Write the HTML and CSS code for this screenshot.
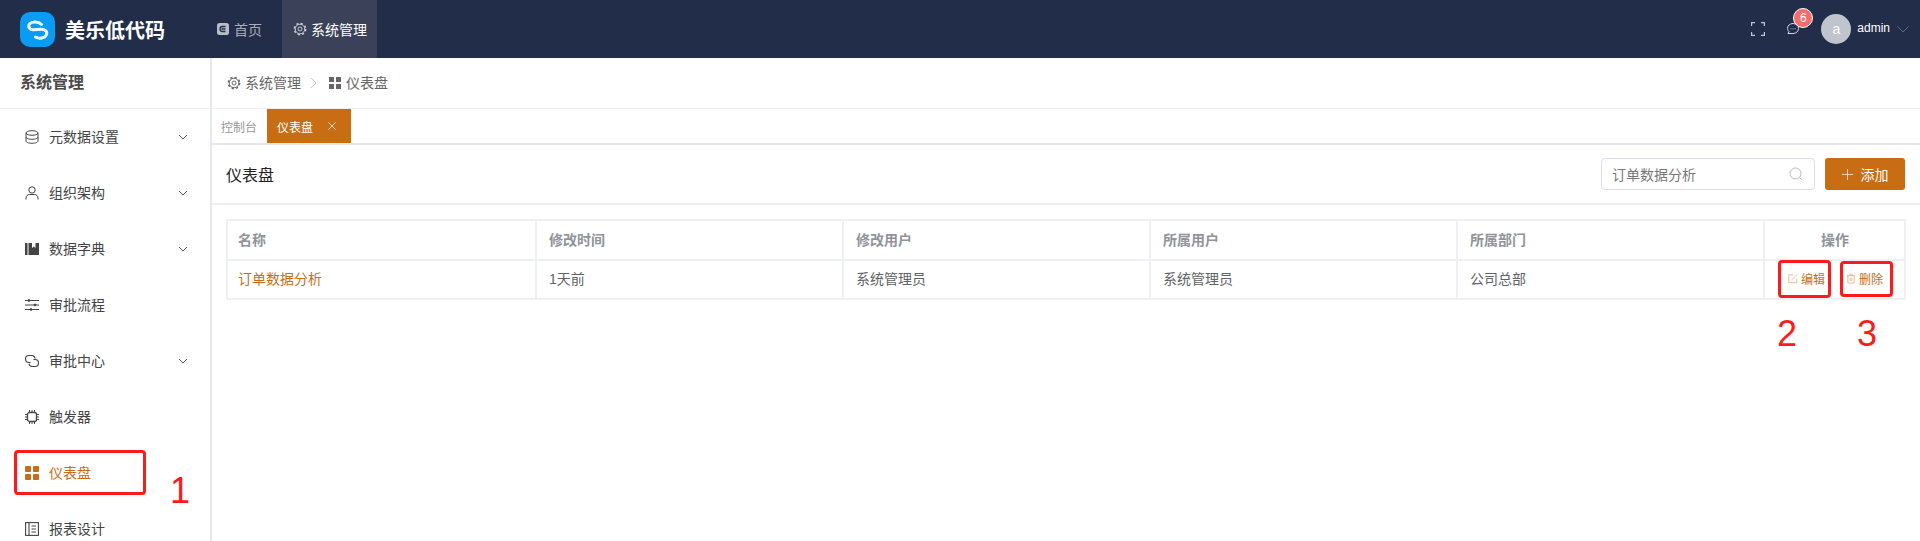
FILE: index.html
```html
<!DOCTYPE html>
<html lang="zh-CN">

<head>
    <meta charset="UTF-8">
    <title>美乐低代码</title>
    <link rel="stylesheet" href="styles.css">
</head>

<body>
    <header class="topbar">
        <div class="logo">
            <svg class="logo-mark" viewBox="0 0 35 35">
                <rect width="35" height="35" rx="10" fill="#0a9cf5" />
                <path d="M21.500 12.500C18.500 9.500 12 9 9.500 12C7.500 15 10 18 13.500 17.800L21 17.200C25 17 27.500 19.500 26.500 22.500C25 26.500 19 27 15.500 25" fill="none" stroke="#eef8ff" stroke-width="3" stroke-linecap="round" />
            </svg>
            <span class="logo-text">美乐低代码</span>
        </div>
        <nav class="topnav">
            <a class="topnav-item">
                <svg class="icon-14" viewBox="0 0 14 14">
                    <rect x="1" y="1" width="12" height="12" rx="2.500" fill="#b9bdc8" />
                    <path d="M9.500 4.500H6.500a2.500 2.500 0 0 0 0 5h3M5.500 7h4" fill="none" stroke="#222d4a" stroke-width="1.300" />
                </svg>
                首页
            </a>
            <a class="topnav-item active">
                <svg class="icon-14" viewBox="0 0 14 14" fill="none" stroke="#c9ccd4">
                    <circle cx="7" cy="7" r="4.800" />
                    <circle cx="7" cy="7" r="5.700" stroke-width="1.400" stroke-dasharray="2.200 2.280" />
                    <circle cx="7" cy="7" r="2" />
                </svg>
                系统管理
            </a>
        </nav>
        <div class="top-right">
            <svg class="fullscreen" viewBox="0 0 14 14" fill="none" stroke="#c4c7cf" stroke-width="1.200">
                <path d="M.6 4V.6H4M10 .6h3.400V4M13.400 10v3.400H10M4 13.400H.6V10" />
            </svg>
            <div class="message">
                <svg class="icon-14" viewBox="0 0 14 14" fill="none" stroke="#d6d8de" stroke-width="1">
                    <path d="M7 1.500c3.200 0 5.500 2.200 5.500 5s-2.300 5-5.500 5H2l1-1.800C2 8.800 1.500 7.700 1.500 6.500c0-2.800 2.300-5 5.500-5z" />
                    <path d="M4.500 6.800h.8M6.600 6.800h.8M8.700 6.800h.8" />
                </svg>
                <span class="badge">6</span>
            </div>
            <div class="avatar">a</div>
            <span class="username">admin</span>
            <svg class="user-arrow" viewBox="0 0 12 7" fill="none" stroke="#5f6881" stroke-width="1">
                <path d="M.5.500 6 6 11.500.500" />
            </svg>
        </div>
    </header>

    <div class="layout">
        <aside class="sidebar">
            <div class="sidebar-title">系统管理</div>
            <ul class="menu">
                <li class="menu-item">
                    <svg class="menu-icon" viewBox="0 0 14 14" fill="none" stroke="#444" stroke-width="1">
                        <ellipse cx="7" cy="3" rx="6" ry="2.300" />
                        <path d="M1 3v8c0 1.300 2.700 2.300 6 2.300s6-1 6-2.300V3M1 7c0 1.300 2.700 2.300 6 2.300S13 8.300 13 7" />
                    </svg>
                    <span class="menu-label">元数据设置</span>
                    <svg class="menu-arrow" viewBox="0 0 10 6" fill="none" stroke="#555" stroke-width="1"><path d="M1 1l4 4 4-4" /></svg>
                </li>
                <li class="menu-item">
                    <svg class="menu-icon" viewBox="0 0 14 14" fill="none" stroke="#444" stroke-width="1">
                        <circle cx="7" cy="4" r="3.200" />
                        <path d="M1 13.500v-1.500c0-2 1.500-3.500 3.500-3.500h5c2 0 3.500 1.500 3.500 3.500v1.500" />
                    </svg>
                    <span class="menu-label">组织架构</span>
                    <svg class="menu-arrow" viewBox="0 0 10 6" fill="none" stroke="#555" stroke-width="1"><path d="M1 1l4 4 4-4" /></svg>
                </li>
                <li class="menu-item">
                    <svg class="menu-icon" viewBox="0 0 14 14" fill="#444">
                        <rect x="0" y="1" width="2.500" height="12" />
                        <path d="M3.500 1h3.500v5l1.800-1.500L10.500 6V1H14v12H3.500z" />
                    </svg>
                    <span class="menu-label">数据字典</span>
                    <svg class="menu-arrow" viewBox="0 0 10 6" fill="none" stroke="#555" stroke-width="1"><path d="M1 1l4 4 4-4" /></svg>
                </li>
                <li class="menu-item">
                    <svg class="menu-icon" viewBox="0 0 14 14" fill="#444" stroke="#444" stroke-width="1">
                        <path d="M0 2.500h14M0 7h14M0 11.500h14" fill="none" />
                        <circle cx="4" cy="2.500" r=".9" />
                        <circle cx="10" cy="7" r=".9" />
                        <circle cx="6" cy="11.500" r=".9" />
                    </svg>
                    <span class="menu-label">审批流程</span>
                </li>
                <li class="menu-item">
                    <svg class="menu-icon" viewBox="0 0 14 14" fill="none" stroke="#444" stroke-width="1.100">
                        <path d="M5.500 8.500H4a3.300 3.300 0 0 1 0-7h3a3.300 3.300 0 0 1 3 3" />
                        <path d="M8.500 5.500H10a3.300 3.300 0 0 1 0 7H7a3.300 3.300 0 0 1-3-3" />
                    </svg>
                    <span class="menu-label">审批中心</span>
                    <svg class="menu-arrow" viewBox="0 0 10 6" fill="none" stroke="#555" stroke-width="1"><path d="M1 1l4 4 4-4" /></svg>
                </li>
                <li class="menu-item">
                    <svg class="menu-icon" viewBox="0 0 14 14" fill="none" stroke="#444" stroke-width="1">
                        <rect x="2.500" y="2.500" width="9" height="9" rx="2" stroke-width="1.300" />
                        <path d="M4.500 0v2M7 0v2M9.500 0v2M4.500 12v2M7 12v2M9.500 12v2M0 4.500h2M0 7h2M0 9.500h2M12 4.500h2M12 7h2M12 9.500h2" />
                    </svg>
                    <span class="menu-label">触发器</span>
                </li>
                <li class="menu-item selected">
                    <svg class="menu-icon" viewBox="0 0 14 14" fill="#c96d14">
                        <rect x="0" y="0" width="6" height="6" rx="1" />
                        <rect x="8" y="0" width="6" height="6" rx="1" />
                        <rect x="0" y="8" width="6" height="6" rx="1" />
                        <rect x="8" y="8" width="6" height="6" rx="1" />
                    </svg>
                    <span class="menu-label">仪表盘</span>
                </li>
                <li class="menu-item">
                    <svg class="menu-icon" viewBox="0 0 14 14" fill="none" stroke="#444" stroke-width="1.100">
                        <rect x=".6" y=".6" width="12.800" height="12.800" />
                        <path d="M4 .6v12.800M6.500 4h4.500M6.500 7h4.500M6.500 10h4.500" />
                    </svg>
                    <span class="menu-label">报表设计</span>
                </li>
            </ul>
        </aside>

        <main class="content">
            <div class="breadcrumb">
                <svg class="crumb-icon" viewBox="0 0 14 14" fill="none" stroke="#666">
                    <circle cx="7" cy="7" r="4.800" />
                    <circle cx="7" cy="7" r="5.700" stroke-width="1.400" stroke-dasharray="2.200 2.280" />
                    <circle cx="7" cy="7" r="2" />
                </svg>
                <span class="crumb-text">系统管理</span>
                <svg class="crumb-sep" viewBox="0 0 7 12" fill="none" stroke="#c0c4cc" stroke-width="1"><path d="M1 1l5 5-5 5" /></svg>
                <svg class="crumb-icon" viewBox="0 0 14 14" fill="#666">
                    <rect x="1" y="1" width="5" height="5" />
                    <rect x="8" y="1" width="5" height="5" />
                    <rect x="1" y="8" width="5" height="5" />
                    <rect x="8" y="8" width="5" height="5" />
                </svg>
                <span class="crumb-text">仪表盘</span>
            </div>

            <div class="tabs">
                <span class="tab">控制台</span>
                <span class="tab tab-active">仪表盘
                    <svg class="tab-close" viewBox="0 0 8 8" fill="none" stroke="#f3dcc6" stroke-width="1"><path d="M.5.500l7 7M7.500.500l-7 7" /></svg>
                </span>
            </div>

            <div class="toolbar">
                <h2 class="page-title">仪表盘</h2>
                <div class="search">
                    <span>订单数据分析</span>
                    <svg class="search-icon" viewBox="0 0 14 14" fill="none" stroke="#b4b8bf" stroke-width="1"><circle cx="6.500" cy="6.500" r="5.500" /><path d="M10.500 10.500l2.500 2.500" /></svg>
                </div>
                <button class="add-btn">
                    <svg class="plus" viewBox="0 0 12 12" fill="none" stroke="#f2d9c0" stroke-width="1"><path d="M6 0v12M0 6h12" /></svg>
                    添加
                </button>
            </div>

            <div class="table-wrap">
                <table class="data-table">
                    <thead>
                        <tr>
                            <th class="col-name">名称</th>
                            <th class="col-mid">修改时间</th>
                            <th class="col-mid">修改用户</th>
                            <th class="col-mid">所属用户</th>
                            <th class="col-mid">所属部门</th>
                            <th class="col-ops">操作</th>
                        </tr>
                    </thead>
                    <tbody>
                        <tr>
                            <td class="link">订单数据分析</td>
                            <td>1天前</td>
                            <td>系统管理员</td>
                            <td>系统管理员</td>
                            <td>公司总部</td>
                            <td class="ops">
                                <a class="op">
                                    <svg class="op-icon" viewBox="0 0 12 12" fill="none" stroke="#e3b080" stroke-width="1">
                                        <path d="M6 1.500H1v9.500h9.500V6" />
                                        <path d="M4.500 7.500 11 1" />
                                    </svg>
                                    编辑
                                </a>
                                <a class="op">
                                    <svg class="op-icon" viewBox="0 0 12 12" fill="none" stroke="#e3b080" stroke-width="1">
                                        <path d="M1 2.500h10M4.500 2.500V.8h3v1.700M2.200 2.500v9h7.600v-9M5 5v4M7 5v4" />
                                    </svg>
                                    删除
                                </a>
                            </td>
                        </tr>
                    </tbody>
                </table>
            </div>
        </main>
    </div>

    <!-- red marks drawn over the screenshot -->
    <div class="mark mark-menu"></div>
    <div class="mark mark-edit"></div>
    <div class="mark mark-del"></div>
    <span class="mark-num num-1">1</span>
    <span class="mark-num num-2">2</span>
    <span class="mark-num num-3">3</span>
</body>

</html>
```

FILE: styles.css
```css
* {
    box-sizing: border-box;
}

html,
body {
    height: 541px;
    overflow: hidden;
}

body {
    margin: 0;
    position: relative;
    font-family: "Liberation Sans", "Noto Sans CJK SC", sans-serif;
    font-size: 14px;
    color: #333;
    background-color: #fff;
}

svg {
    display: block;
    flex-shrink: 0;
}

.icon-14 {
    width: 14px;
    height: 14px;
}

/* top bar */
.topbar {
    display: flex;
    align-items: center;
    height: 58px;
    background-color: #222d4a;
    color: #fff;
}

.logo {
    display: flex;
    align-items: center;
    width: 205px;
    padding-left: 20px;
}

.logo-mark {
    width: 35px;
    height: 35px;
}

.logo-text {
    margin-left: 10px;
    font-size: 20px;
    font-weight: bold;
}

.topnav {
    display: flex;
    height: 100%;
}

.topnav-item {
    display: flex;
    align-items: center;
    gap: 4px;
    height: 100%;
    padding: 0 0 0 11px;
    white-space: nowrap;
    color: #a9adb9;
}

.topnav-item:first-child {
    width: 77px;
}

.topnav-item.active {
    width: 95px;
    background-color: #3a4159;
    color: #fff;
}

.top-right {
    display: flex;
    align-items: center;
    margin-left: auto;
    padding-right: 11px;
}

.fullscreen {
    width: 14px;
    height: 14px;
    margin-right: 21px;
}

.message {
    position: relative;
    margin-right: 21px;
}

.badge {
    position: absolute;
    top: -14px;
    left: 7px;
    width: 20px;
    height: 20px;
    border: 1px solid #fff;
    border-radius: 50%;
    background-color: #f56c6c;
    color: #fff;
    font-size: 12px;
    line-height: 18px;
    text-align: center;
}

.avatar {
    width: 30px;
    height: 30px;
    border-radius: 50%;
    background-color: #c0c4cc;
    color: #fff;
    font-size: 14px;
    line-height: 30px;
    text-align: center;
}

.username {
    margin-left: 6px;
    font-size: 12px;
    color: #fff;
    position: relative;
    top: -1px;
}

.user-arrow {
    width: 12px;
    height: 7px;
    margin-left: 7px;
}

/* sidebar */
.layout {
    display: flex;
    height: 483px;
}

.sidebar {
    width: 212px;
    flex-shrink: 0;
    border-right: 2px solid #e6e8ee;
    overflow: hidden;
}

.sidebar-title {
    height: 51px;
    padding: 0 20px;
    border-bottom: 1px solid #eef0f6;
    font-size: 16px;
    font-weight: bold;
    line-height: 50px;
    color: #4a4a4a;
}

.menu {
    list-style: none;
    margin: 0;
    padding: 0;
}

.menu-item {
    display: flex;
    align-items: center;
    height: 56px;
    padding: 0 22px 0 25px;
    color: #444;
}

.menu-icon {
    width: 14px;
    height: 14px;
    margin-right: 10px;
}

.menu-label {
    padding-bottom: 2px;
}

.menu-arrow {
    width: 10px;
    height: 6px;
    margin-left: auto;
}

.menu-item.selected {
    color: #c96d14;
}

/* main part */
.content {
    flex: 1;
    min-width: 0;
}

.breadcrumb {
    display: flex;
    align-items: center;
    height: 51px;
    padding: 0 15px 1px;
    border-bottom: 1px solid #eef0f6;
    color: #666;
}

.crumb-icon {
    width: 14px;
    height: 14px;
    margin-right: 4px;
}

.crumb-text {
    padding-bottom: 2px;
}

.crumb-sep {
    width: 7px;
    height: 12px;
    margin: 0 11px 0 9px;
}

.tabs {
    display: flex;
    height: 36px;
    border-bottom: 2px solid #e6e8ee;
}

.tab {
    display: flex;
    align-items: center;
    height: 34px;
    padding: 0 10px 0 9px;
    font-size: 12px;
    color: #999;
}

.tab-active {
    justify-content: space-between;
    width: 84px;
    padding: 0 10px;
    background-color: #c96d14;
    color: #fff;
}

.tab-close {
    width: 8px;
    height: 8px;
    margin-right: 5px;
}

.toolbar {
    display: flex;
    align-items: center;
    height: 60px;
    padding: 0 15px 0 14px;
    border-bottom: 2px solid #eceef5;
}

.page-title {
    margin: 0;
    font-size: 16px;
    font-weight: normal;
    color: #222;
}

.search {
    display: flex;
    align-items: center;
    justify-content: space-between;
    width: 214px;
    height: 32px;
    margin-left: auto;
    padding: 0 11px 0 10px;
    border: 1px solid #dcdfe6;
    border-radius: 4px;
    color: #777;
}

.search-icon {
    width: 14px;
    height: 14px;
}

.add-btn {
    display: flex;
    align-items: center;
    justify-content: center;
    gap: 8px;
    width: 80px;
    height: 32px;
    margin-left: 10px;
    border: 0;
    border-radius: 3px;
    background-color: #c96d14;
    color: #fff;
    font-family: inherit;
    font-size: 14px;
}

.plus {
    width: 11px;
    height: 11px;
}

/* table */
.table-wrap {
    padding: 14px 14px 0;
}

.data-table {
    width: 1680px;
    border-collapse: collapse;
    table-layout: fixed;
}

.data-table th,
.data-table td {
    height: 40px;
    padding: 0 11px 3px 12px;
    border: 2px solid #eef0f6;
    text-align: left;
    font-size: 14px;
}

.data-table th {
    color: #909399;
    font-weight: bold;
}

.data-table td {
    height: 39px;
    padding-bottom: 4px;
    color: #606266;
}

.data-table .col-name,
.data-table .link {
    padding-left: 10px;
}

.col-name {
    width: 309px;
}

.col-mid {
    width: 307px;
}

.data-table th.col-ops {
    text-align: center;
}

.data-table td.link {
    color: #c96d14;
}

.data-table td.ops {
    padding: 0 0 3px;
}

.ops {
    white-space: nowrap;
}

.op {
    display: inline-flex;
    align-items: center;
    gap: 3px;
    margin-left: 23px;
    font-size: 12px;
    color: #c96d14;
}

.op + .op {
    margin-left: 17px;
}

.op-icon {
    width: 10px;
    height: 11px;
}

/* annotations */
.mark {
    position: absolute;
    border: 3px solid #fb1b1b;
    border-radius: 4px;
}

.mark-menu {
    left: 14px;
    top: 450px;
    width: 132px;
    height: 45px;
}

.mark-edit {
    left: 1778px;
    top: 260px;
    width: 53px;
    height: 38px;
}

.mark-del {
    left: 1840px;
    top: 261px;
    width: 53px;
    height: 36px;
}

.mark-num {
    position: absolute;
    color: #fb1b1b;
    font-size: 36px;
    line-height: 36px;
}

.num-1 {
    left: 170px;
    top: 473px;
}

.num-2 {
    left: 1777px;
    top: 316px;
}

.num-3 {
    left: 1857px;
    top: 316px;
}
```
